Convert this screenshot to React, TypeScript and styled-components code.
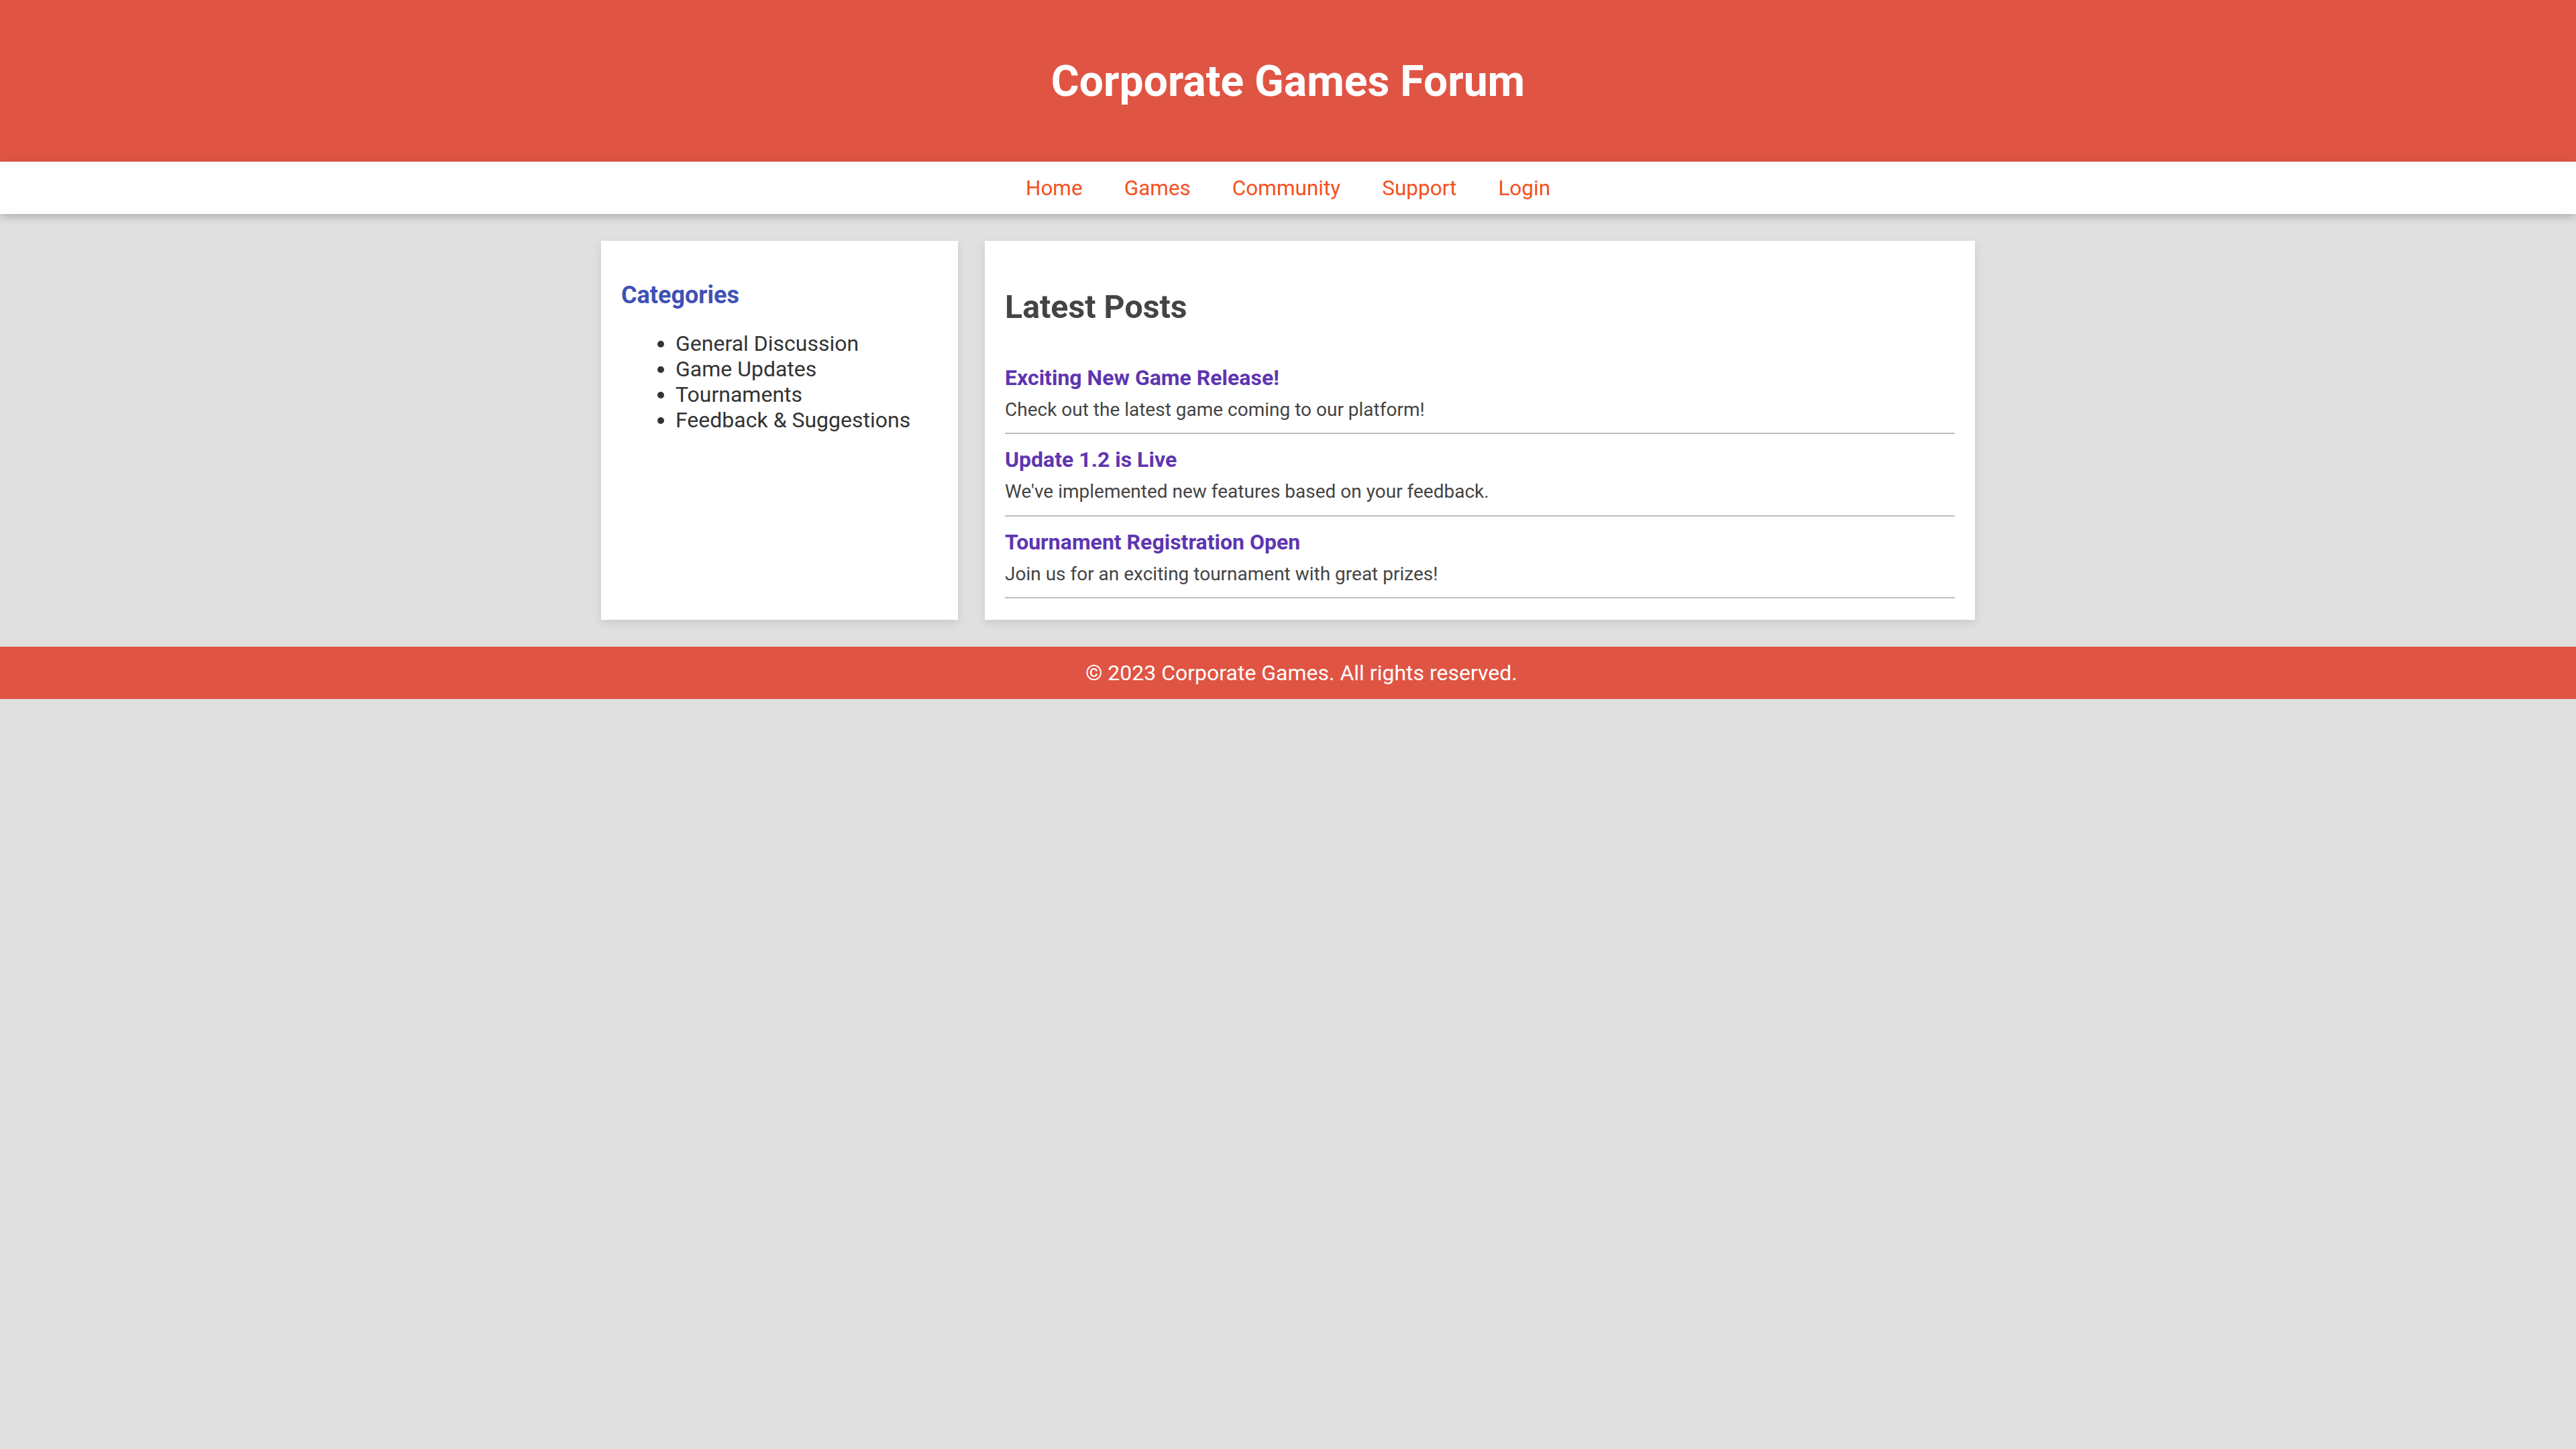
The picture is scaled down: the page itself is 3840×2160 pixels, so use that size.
import React from "react";
import styled, { createGlobalStyle } from "styled-components";

const GlobalStyle = createGlobalStyle`
  html, body {
    margin: 0;
    padding: 0;
    background: #e0e0e0;
    font-family: Roboto, "Noto Sans", Arial, sans-serif;
    color: #333;
  }
`;

const categories = [
  "General Discussion",
  "Game Updates",
  "Tournaments",
  "Feedback & Suggestions",
];

const posts = [
  {
    title: "Exciting New Game Release!",
    text: "Check out the latest game coming to our platform!",
  },
  {
    title: "Update 1.2 is Live",
    text: "We've implemented new features based on your feedback.",
  },
  {
    title: "Tournament Registration Open",
    text: "Join us for an exciting tournament with great prizes!",
  },
];

const navLinks = ["Home", "Games", "Community", "Support", "Login"];

const App = () => {
  return (
    <>
      <GlobalStyle />
      <S.Header>
        <S.Title>Corporate Games Forum</S.Title>
      </S.Header>
      <S.Nav>
        {navLinks.map((link) => (
          <S.NavLink key={link} href="#">
            {link}
          </S.NavLink>
        ))}
      </S.Nav>
      <S.Container>
        <S.Sidebar>
          <S.SideTitle>Categories</S.SideTitle>
          <S.CategoryList>
            {categories.map((c) => (
              <li key={c}>{c}</li>
            ))}
          </S.CategoryList>
        </S.Sidebar>
        <S.Main>
          <S.MainTitle>Latest Posts</S.MainTitle>
          {posts.map((p) => (
            <S.Post key={p.title}>
              <S.PostTitle>{p.title}</S.PostTitle>
              <S.PostText>{p.text}</S.PostText>
            </S.Post>
          ))}
        </S.Main>
      </S.Container>
      <S.Footer>© 2023 Corporate Games. All rights reserved.</S.Footer>
    </>
  );
};

const S = {
  Header: styled.header`
    background: #e05444;
    height: 241px;
    display: flex;
    align-items: center;
    justify-content: center;
  `,
  Title: styled.h1`
    margin: 0;
    color: #fff;
    font-size: 64.2px;
    font-weight: 700;
  `,
  Nav: styled.nav`
    background: #fff;
    height: 78px;
    display: flex;
    align-items: center;
    justify-content: center;
    gap: 62px;
    box-shadow: 0 5px 12px rgba(0, 0, 0, 0.2);
    position: relative;
  `,
  NavLink: styled.a`
    color: #f4511e;
    font-size: 31.5px;
    text-decoration: none;
  `,
  Container: styled.div`
    width: 2048px;
    margin: 40px auto;
    display: flex;
    gap: 40px;
    align-items: stretch;
  `,
  Sidebar: styled.aside`
    width: 532px;
    box-sizing: border-box;
    background: #fff;
    padding: 30px;
    box-shadow: 0 5px 12px rgba(0, 0, 0, 0.1);
  `,
  SideTitle: styled.h3`
    margin: 30.3px 0 32px;
    color: #3f51b5;
    font-size: 36px;
    font-weight: 700;
  `,
  CategoryList: styled.ul`
    margin: 0;
    padding-left: 81px;
    font-size: 32px;
    color: #333;
  `,
  Main: styled.main`
    flex: 1;
    box-sizing: border-box;
    background: #fff;
    padding: 30px 30px 32px;
    box-shadow: 0 5px 12px rgba(0, 0, 0, 0.1);
  `,
  MainTitle: styled.h2`
    margin: 40.2px 0 38.4px;
    color: #444;
    font-size: 48.3px;
    font-weight: 700;
  `,
  Post: styled.div`
    padding: 19px 0 18.5px;
    border-bottom: 2px solid #bdbdbd;
  `,
  PostTitle: styled.h4`
    margin: 0 0 12px;
    color: #5e35b1;
    font-size: 32px;
    font-weight: 700;
  `,
  PostText: styled.p`
    margin: 0;
    color: #444;
    font-size: 28px;
  `,
  Footer: styled.footer`
    box-sizing: border-box;
    background: #e05444;
    color: #fff;
    height: 78px;
    padding-left: 40px;
    display: flex;
    align-items: center;
    justify-content: center;
    font-size: 32px;
  `,
};

export default App;
